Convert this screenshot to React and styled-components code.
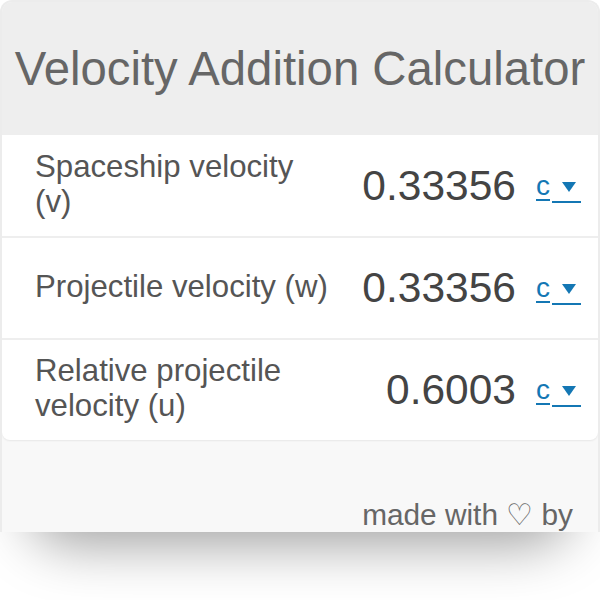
import React from "react";
import styled, { createGlobalStyle } from "styled-components";

const Global = createGlobalStyle`
  html, body { margin: 0; padding: 0; background: #ffffff; }
  body { font-family: "Liberation Sans", Arial, sans-serif; }
`;

const Page = styled.div`
  width: 600px;
  display: flex;
  flex-direction: column;
`;

const Widget = styled.div`
  box-sizing: border-box;
  width: 600px;
  height: 532px;
  overflow: hidden;
  background: #f8f8f8;
  border: 2px solid #ececec;
  border-bottom: none;
  border-radius: 12px 12px 0 0;
  display: flex;
  flex-direction: column;
`;

const Shadow = styled.div`
  position: relative;
  height: 68px;
  overflow: hidden;
  &::before {
    content: "";
    position: absolute;
    top: -60px;
    left: 40px;
    right: 40px;
    height: 60px;
    border-radius: 50px;
    box-shadow: 0 0 55px 12px rgba(0, 0, 0, 0.38);
  }
`;

const Header = styled.header`
  height: 133px;
  background: #eeeeee;
  display: flex;
  align-items: center;
  justify-content: center;
`;

const Title = styled.h1`
  margin: 0;
  font-weight: 400;
  font-size: 47.3px;
  color: #666666;
`;

const Card = styled.section`
  background: #ffffff;
  border-radius: 0 0 8px 8px;
  box-shadow: 0 1px 2px rgba(0, 0, 0, 0.07);
  display: flex;
  flex-direction: column;
`;

const Row = styled.div`
  display: flex;
  align-items: center;
  padding: 0 17px 0 33px;
  border-top: ${(p) => (p.$first ? "none" : "2px solid #eeeeee")};
  box-sizing: border-box;
  height: ${(p) => (p.$first ? "101px" : "102px")};
`;

const Label = styled.div`
  flex: none;
  width: 298px;
  font-size: 31.2px;
  line-height: 35px;
  color: #555555;
  margin-top: -4px;
`;

const Value = styled.div`
  flex: 1;
  text-align: right;
  font-size: 42.5px;
  color: #444444;
  margin-right: 20px;
`;

const Unit = styled.div`
  display: flex;
  align-items: flex-end;
  color: #1477b4;
  font-size: 28px;
`;

const UnitText = styled.span`
  text-decoration: underline;
  text-decoration-thickness: 2px;
  text-underline-offset: 4px;
  line-height: 30px;
`;

const Arrow = styled.span`
  width: 29px;
  height: 22px;
  margin-left: 2px;
  border-bottom: 2px solid #1477b4;
  display: flex;
  justify-content: center;
  align-items: flex-start;
  padding-top: 1px;
  box-sizing: border-box;
  margin-bottom: -2px;
  &::after {
    content: "";
    width: 0;
    height: 0;
    margin-left: 5px;
    border-left: 7px solid transparent;
    border-right: 7px solid transparent;
    border-top: 10px solid #1477b4;
  }
`;

const Footer = styled.footer`
  flex: 1;
  display: flex;
  justify-content: flex-end;
  align-items: flex-end;
  padding: 0 25px 0 0;
`;

const Credit = styled.div`
  font-size: 29.8px;
  color: #666666;
  line-height: 34px;
  margin-bottom: 0;
`;

const rows = [
  { label: "Spaceship velocity (v)", value: "0.33356" },
  { label: "Projectile velocity (w)", value: "0.33356" },
  { label: "Relative projectile velocity (u)", value: "0.6003" },
];

export default function App() {
  return (
    <>
      <Global />
      <Page>
        <Widget>
          <Header>
            <Title>Velocity Addition Calculator</Title>
          </Header>
          <Card>
            {rows.map((r, i) => (
              <Row key={r.label} $first={i === 0}>
                <Label>{r.label}</Label>
                <Value>{r.value}</Value>
                <Unit>
                  <UnitText>c</UnitText>
                  <Arrow />
                </Unit>
              </Row>
            ))}
          </Card>
          <Footer>
            <Credit>made with ♡ by</Credit>
          </Footer>
        </Widget>
        <Shadow />
      </Page>
    </>
  );
}
